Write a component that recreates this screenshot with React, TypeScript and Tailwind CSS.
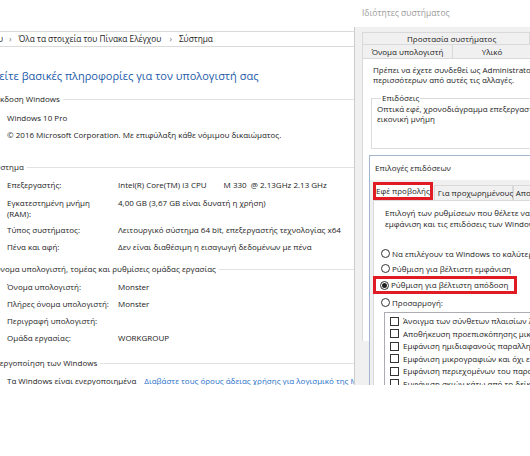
import React from 'react';

type InfoRowProps = {
  label: React.ReactNode;
  value?: React.ReactNode;
  className?: string;
};

const SectionHeader = ({ text, className }: { text: string; className: string }) => (
  <div className={`flex h-[14px] items-center ${className}`}>
    <span className="whitespace-nowrap leading-[14px]">{text}</span>
    <div className="ml-[3px] h-px flex-1 bg-[#e2e2e2]" />
  </div>
);

const InfoRow = ({ label, value, className = 'py-[3px]' }: InfoRowProps) => (
  <div className={`grid grid-cols-[111px_1fr] pl-[7px] leading-[11px] ${className}`}>
    <div className="whitespace-nowrap">{label}</div>
    <div className="whitespace-nowrap">{value}</div>
  </div>
);

const Radio = ({ checked = false }: { checked?: boolean }) => (
  <span className="flex h-[9px] w-[9px] shrink-0 items-center justify-center rounded-full border border-[#333333] bg-white">
    {checked && <span className="h-[5px] w-[5px] rounded-full bg-[#222222]" />}
  </span>
);

const effects = [
  'Άνοιγμα των σύνθετων πλαισίων λίστας με κύλιση',
  'Αποθήκευση προεπισκόπησης μικρογραφιών της γραμμής εργασιών',
  'Εμφάνιση ημιδιαφανούς παραλληλογράμμου επιλογής',
  'Εμφάνιση μικρογραφιών και όχι εικονιδίων',
  'Εμφάνιση περιεχομένων του παραθύρου κατά τη μεταφορά',
  'Εμφάνιση σκιών κάτω από το δείκτη του ποντικιού',
];

const ControlPanel = () => (
  <div className="w-[354px] shrink-0 overflow-hidden bg-white">
    <div className="h-[31px]" />
    <div className="flex h-[16px] items-center whitespace-nowrap border-y border-[#dadada] text-[8.3px] leading-[14px]">
      <div className="flex w-[3px] justify-end overflow-hidden">
        <span>Πίνακας Ελέγχου</span>
      </div>
      <span className="ml-[6px] text-[#7a7a7a]">›</span>
      <span className="ml-[7px]">Όλα τα στοιχεία του Πίνακα Ελέγχου</span>
      <span className="ml-[8px] text-[#7a7a7a]">›</span>
      <span className="ml-[7px]">Σύστημα</span>
    </div>

    <div className="ml-[-7px] mt-[20px] whitespace-nowrap text-[11px] leading-[18px] text-[#1d5ba8]">
      Δείτε βασικές πληροφορίες για τον υπολογιστή σας
    </div>

    <SectionHeader text="Έκδοση Windows" className="ml-[-5px] mt-[7px]" />
    <InfoRow label="Windows 10 Pro" className="mt-[3px] py-[3px]" />
    <InfoRow label="© 2016 Microsoft Corporation. Με επιφύλαξη κάθε νόμιμου δικαιώματος." />

    <SectionHeader text="Σύστημα" className="ml-[-9px] mt-[17px]" />
    <InfoRow
      className="mt-[2px] py-[3px]"
      label="Επεξεργαστής:"
      value={
        <>
          <span>Intel(R) Core(TM) i3 CPU</span>
          <span className="ml-[17px]">M 330&nbsp;&nbsp;@ 2.13GHz 2.13 GHz</span>
        </>
      }
    />
    <InfoRow
      className="pb-[2px] pt-[4px]"
      label={
        <>
          Εγκατεστημένη μνήμη
          <br />
          (RAM):
        </>
      }
      value="4,00 GB (3,67 GB είναι δυνατή η χρήση)"
    />
    <InfoRow label="Τύπος συστήματος:" value="Λειτουργικό σύστημα 64 bit, επεξεργαστής τεχνολογίας x64" />
    <InfoRow label="Πένα και αφή:" value="Δεν είναι διαθέσιμη η εισαγωγή δεδομένων με πένα" />

    <SectionHeader text="Όνομα υπολογιστή, τομέας και ρυθμίσεις ομάδας εργασίας" className="ml-[-6px] mt-[7px]" />
    <InfoRow className="mt-[2px] py-[3px]" label="Όνομα υπολογιστή:" value="Monster" />
    <InfoRow label="Πλήρες όνομα υπολογιστή:" value="Monster" />
    <InfoRow label="Περιγραφή υπολογιστή:" />
    <InfoRow label="Ομάδα εργασίας:" value="WORKGROUP" />

    <SectionHeader text="Ενεργοποίηση των Windows" className="ml-[-9px] mt-[10px]" />
    <div className="mt-[2px] flex whitespace-nowrap py-[3px] pl-[7px] leading-[11px]">
      <span>Τα Windows είναι ενεργοποιημένα</span>
      <span className="ml-[8px] text-[#1e6fc9]">Διαβάστε τους όρους άδειας χρήσης για λογισμικό της Microsoft</span>
    </div>
  </div>
);

const PerformanceOptions = () => (
  <div className="absolute left-[15px] top-[155px] h-[240px] w-[200px] border border-[#a3b5cc] bg-[#f0f0f0]">
    <div className="h-[24px] whitespace-nowrap bg-white pl-[5px] leading-[24px]">Επιλογές επιδόσεων</div>

    <div className="ml-[3px] mt-[2px] flex h-[18px] items-end whitespace-nowrap">
      <div className="flex h-[18px] w-[62px] items-center justify-center border-[3px] border-[#e01b24] bg-white">
        Εφέ προβολής
      </div>
      <div className="ml-[1px] flex h-[15px] w-[79px] items-center border border-b-0 border-[#d9d9d9] bg-[#f0f0f0] pl-[3px]">
        Για προχωρημένους
      </div>
      <div className="flex h-[15px] w-[60px] items-center border border-b-0 border-[#d9d9d9] bg-[#f0f0f0] pl-[2px]">
        Απομακρυσμένη
      </div>
    </div>

    <div className="ml-[3px] h-[200px] whitespace-nowrap border-l border-t border-[#d9d9d9] bg-white">
      <div className="pl-[11px] pt-[7px] leading-[10.5px]">
        Επιλογή των ρυθμίσεων που θέλετε να χρησιμοποιηθούν για την
        <br />
        εμφάνιση και τις επιδόσεις των Windows σε αυτόν τον υπολογιστή.
      </div>

      <div className="mt-[17px] flex h-[15px] items-center gap-[2px] pl-[7px]">
        <Radio />
        <span>Να επιλέγουν τα Windows το καλύτερο για τον υπολογιστή μου</span>
      </div>
      <div className="flex h-[15px] items-center gap-[2px] pl-[7px]">
        <Radio />
        <span>Ρύθμιση για βέλτιστη εμφάνιση</span>
      </div>
      <div className="ml-[-1px] flex h-[18px] w-[144px] items-center gap-[2px] border-[3px] border-[#e01b24] pl-[4px]">
        <Radio checked />
        <span>Ρύθμιση για βέλτιστη απόδοση</span>
      </div>
      <div className="mt-[1px] flex h-[15px] items-center gap-[2px] pl-[7px]">
        <Radio />
        <span>Προσαρμογή:</span>
      </div>

      <div className="ml-[10px] mt-[2px] h-[120px] w-[200px] border border-[#abadb3] pl-[5px] pt-[2px]">
        {effects.map((label) => (
          <div key={label} className="flex h-[12.5px] items-center gap-[4px]">
            <span className="h-[9px] w-[9px] shrink-0 border border-[#333333] bg-white" />
            <span>{label}</span>
          </div>
        ))}
      </div>
    </div>
  </div>
);

const SystemProperties = () => (
  <div className="relative flex-1 overflow-hidden">
    <div className="flex h-[27px] items-center whitespace-nowrap bg-white pl-[8px] text-[8.5px] text-[#9b9b9b]">
      Ιδιότητες συστήματος
    </div>
    <div className="h-[358px] whitespace-nowrap border-l border-[#cccccc] bg-[#f0f0f0] pl-[7px] pt-[5px]">
      <div className="flex h-[12px]">
        <div className="w-[300px] border border-b-0 border-[#d9d9d9] pl-[44px] leading-[11px]">Προστασία συστήματος</div>
      </div>
      <div className="flex h-[14px]">
        <div className="w-[130px] border-l border-t border-[#d9d9d9] text-center leading-[13px]">Όνομα υπολογιστή</div>
        <div className="w-[100px] border-l border-t border-[#d9d9d9] pl-[29px] leading-[13px]">Υλικό</div>
      </div>
      <div className="h-[283px] border-l border-t border-[#d9d9d9] bg-white pl-[10px] pt-[6px]">
        <div className="leading-[10px]">
          Πρέπει να έχετε συνδεθεί ως Administrator για να κάνετε τις
          <br />
          περισσότερων από αυτές τις αλλαγές.
        </div>
        <fieldset className="ml-[-2px] mt-[8px] h-[56px] w-[200px] border border-[#dcdcdc] pl-[5px]">
          <legend className="ml-[4px] px-[1px] leading-[10px]">Επιδόσεις</legend>
          <div className="pt-[1px] leading-[10px]">
            Οπτικά εφέ, χρονοδιάγραμμα επεξεργαστή, χρήση μνήμης και
            <br />
            εικονική μνήμη
          </div>
        </fieldset>
      </div>
    </div>
    <PerformanceOptions />
  </div>
);

export default function App() {
  return (
    <div className="h-[456px] w-[530px] overflow-hidden bg-white font-['Open_Sans','Noto_Sans','DejaVu_Sans',sans-serif] text-[8px] text-[#1b1b1b]">
      <div className="flex h-[385px] overflow-hidden">
        <ControlPanel />
        <SystemProperties />
      </div>
    </div>
  );
}
